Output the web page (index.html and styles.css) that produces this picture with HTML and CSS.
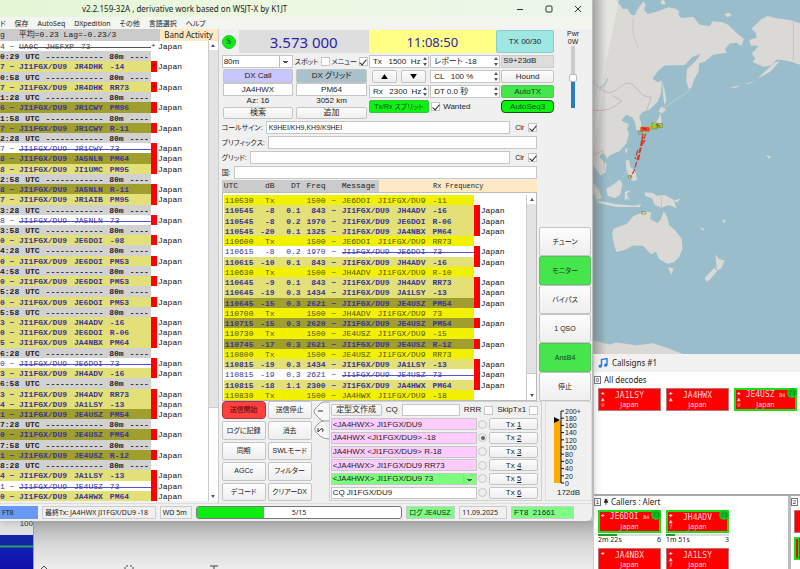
FILE: index.html
```html
<!DOCTYPE html>
<html lang="ja">
<head>
<meta charset="utf-8">
<title>v2.2.159-32A , derivative work based on WSJT-X by K1JT</title>
<link rel="stylesheet" href="styles.css">
</head>
<body>
<div class="desktop">
  <div class="left-side">
    <main class="window">
      <header class="titlebar">
        <h1>v2.2.159-32A , derivative work based on WSJT-X by K1JT</h1>
        <div class="caption">
          <button aria-label="最小化"><svg viewBox="0 0 8 8"><path d="M1 4.5h6"/></svg></button>
          <button aria-label="最大化"><svg viewBox="0 0 8 8"><rect x="1" y="1" width="6" height="6" rx="1"/></svg></button>
          <button aria-label="閉じる"><svg viewBox="0 0 8 8"><path d="M1 1l6 6M7 1l-6 6"/></svg></button>
        </div>
      </header>
      <nav class="menubar">
        <a href="#">ド</a><a href="#">保存</a><a href="#">AutoSeq</a><a href="#">DXpedition</a><a href="#">その他</a><a href="#">言語選択</a><a href="#">ヘルプ</a>
      </nav>
      <div class="panes">
        <section class="band">
          <div class="band-head"><span class="stats"><span>g</span><span>平均=0.23 Lag=-0.23/3</span></span><span class="peach">Band Activity</span></div>
          <div class="logbox">
            <table class="log" id="band-log"><tbody></tbody></table>
            <div class="scroll"><i class="up"></i><i class="thumb"></i><i class="down"></i></div>
          </div>
        </section>
        <section class="work">
          <div class="top">
            <div class="controls">
              <div class="dials">
                <button class="s-btn">S</button>
                <output class="freq">3.573 000</output>
                <output class="clock">11:08:50</output>
                <button class="tx-period">TX 00/30</button>
              </div>
              <div class="trio">
                <div class="dx">
                  <div class="band-row">
                    <select aria-label="バンド"><option>80m</option></select>
                    <label class="boxed">スポット<input type="checkbox"></label>
                    <label>メニュー<input type="checkbox" checked></label>
                  </div>
                  <div class="pair">
                    <button class="btn lilac">DX Call</button><button class="btn teal">DX グリッド</button>
                    <input class="center" value="JA4HWX" aria-label="DX Call"><input class="center" value="PM64" aria-label="DX グリッド">
                    <span>Az: 16</span><span>3052 km</span>
                    <button class="btn">検索</button><button class="btn">追加</button>
                  </div>
                </div>
                <div class="spins">
                  <div class="spin"><input value="Tx   1500  Hz" aria-label="Tx"><i></i></div>
                  <div class="spin"><input value="レポート -18" aria-label="レポート"><i></i></div>
                  <div class="arrows"><button class="btn" aria-label="上"><svg viewBox="0 0 8 6"><path d="M4 0l4 6H0z"/></svg></button><button class="btn" aria-label="下"><svg viewBox="0 0 8 6"><path d="M4 6l4-6H0z"/></svg></button></div>
                  <div class="spin"><input value="CL   100 %" aria-label="CL"><i></i></div>
                  <div class="spin"><input value="Rx   2300  Hz" aria-label="Rx"><i></i></div>
                  <div class="spin"><input value="DT 0.0 秒" aria-label="DT"><i></i></div>
                  <button class="btn lime">Tx/Rx スプリット</button>
                  <label class="wanted"><input type="checkbox" checked>Wanted</label>
                </div>
                <div class="modes">
                  <span class="smeter">S9+23dB</span>
                  <button class="btn">Hound</button>
                  <button class="btn green">AutoTX</button>
                  <button class="btn lime ring">AutoSeq3</button>
                </div>
              </div>
            </div>
            <div class="pwr">
              <label for="pwr">Pwr<br>0W</label>
              <input type="range" id="pwr" min="0" max="100" value="49">
            </div>
          </div>
          <div class="middle">
            <div class="rx">
              <div class="fields">
                <div class="field"><label for="cs">コールサイン:</label><input id="cs" value="K9HEI/KH9,KH9/K9HEI"><label class="clr">Clr<input type="checkbox" checked></label></div>
                <div class="field"><label for="pf">プリフィックス:</label><input id="pf"></div>
                <div class="field"><label for="gr">グリッド:</label><input id="gr"><label class="clr">Clr<input type="checkbox" checked></label></div>
                <div class="field"><label for="co">国:</label><input id="co"></div>
              </div>
              <div class="rx-head"><span class="cols"><span>UTC</span><span>dB</span><span>DT</span><span>Freq</span><span></span><span>Message</span></span><span class="peach">Rx Frequency</span></div>
              <div class="logbox framed">
                <table class="log rxlog" id="rx-log"><tbody></tbody></table>
                <div class="scroll low"><i class="up"></i><i class="thumb"></i><i class="down"></i></div>
              </div>
            </div>
            <div class="side">
              <button class="btn">チューン</button>
              <button class="btn green">モニター</button>
              <button class="btn">バイパス</button>
              <button class="btn">1 QSO</button>
              <button class="btn green">AnsB4</button>
              <button class="btn">停止</button>
            </div>
          </div>
          <div class="bottom">
            <div class="actions">
              <button class="btn red">送信開始</button><button class="btn">送信停止</button>
              <button class="btn">ログに記録</button><button class="btn">消去</button>
              <button class="btn">同期</button><button class="btn">SWLモード</button>
              <button class="btn">AGCc</button><button class="btn">フィルター</button>
              <button class="btn">デコード</button><button class="btn">クリアーDX</button>
            </div>
            <svg class="tabs" viewBox="0 0 17 40"><path d="M17 1H12Q9 1 7 4L3 8Q1 10 3 13L7 17Q9 20 12 20H17M12 20Q9 20 7 22L4 25Q1 28 4 31L8 35Q12 38 17 38"/><path class="num" d="M6 10h5M6 27v4l3-3q2-1 2 1t-1 2"/></svg>
            <div class="messages">
              <div class="msg-head">
                <button class="btn">定型文作成</button>
                <label for="cq">CQ</label><input id="cq">
                <label class="clr">RRR<input type="checkbox"></label>
                <label class="clr">SkipTx1<input type="checkbox"></label>
              </div>
              <div class="tx-row"><input class="pink" value="&lt;JA4HWX&gt; JI1FGX/DU9" aria-label="Tx 1 文"><input type="radio" name="tx" aria-label="次 1"><button class="btn">Tx <u>1</u></button></div>
              <div class="tx-row"><input class="pink" value="JA4HWX &lt;JI1FGX/DU9&gt; -18" aria-label="Tx 2 文"><input type="radio" name="tx" aria-label="次 2" checked><button class="btn">Tx <u>2</u></button></div>
              <div class="tx-row"><input class="pink" value="JA4HWX &lt;JI1FGX/DU9&gt; R-18" aria-label="Tx 3 文"><input type="radio" name="tx" aria-label="次 3"><button class="btn">Tx <u>3</u></button></div>
              <div class="tx-row"><input class="pink" value="&lt;JA4HWX&gt; JI1FGX/DU9 RR73" aria-label="Tx 4 文"><input type="radio" name="tx" aria-label="次 4"><button class="btn">Tx <u>4</u></button></div>
              <div class="tx-row"><select class="mint" aria-label="Tx 5 文"><option>&lt;JA4HWX&gt; JI1FGX/DU9 73</option></select><input type="radio" name="tx" aria-label="次 5"><button class="btn">Tx <u>5</u></button></div>
              <div class="tx-row"><input value="CQ JI1FGX/DU9" aria-label="Tx 6 文"><input type="radio" name="tx" aria-label="次 6"><button class="btn">Tx <u>6</u></button></div>
            </div>
            <div class="meter">
              <svg viewBox="0 0 40 82">
                <rect x="6" y="15" width="7" height="62" fill="#ffaa00"/>
                <path d="M16 5h-3v72h3M13 12.2h3M13 19.4h3M13 26.6h3M13 33.8h3M13 41h3M13 48.2h3M13 55.4h3M13 62.6h3M13 69.8h3" fill="none" stroke="#111"/>
                <path d="M6 11l6 3-6 3z"/>
                <g><text x="17" y="8">200+</text><text x="17" y="15">180</text><text x="17" y="22">160</text><text x="17" y="29">140</text><text x="17" y="37">120</text><text x="17" y="44">100</text><text x="17" y="51">80</text><text x="17" y="58">60</text><text x="17" y="65">40</text><text x="17" y="73">20</text><text x="17" y="80">0</text></g>
              </svg>
              <span>172dB</span>
            </div>
          </div>
        </section>
      </div>
      <footer class="status">
        <span class="s-mode">FT8</span>
        <span class="s-last">最終Tx: JA4HWX JI1FGX/DU9 -18</span>
        <span class="s-wd">WD 5m</span>
        <span class="progress"><i></i><b>5/15</b></span>
        <span class="s-log">ログ JE4USZ</span>
        <span class="s-date">11.09.2025</span>
        <span class="s-ft">FT8&nbsp; 21661</span>
      </footer>
    </main>
    <div class="behind">
      <div class="waterfall"><span>100</span><i></i></div>
      <svg class="marks" viewBox="0 0 180 4"><path d="M1 4l3-3 3 3M86 1h2m2 0h2m-7 1v2m8-2v2M170 1h8m-4 0v3" fill="none" stroke="#444"/></svg>
    </div>
  </div>
  <div class="right-side">
    <svg class="map" viewBox="10 0 620 1062" preserveAspectRatio="xMinYMin slice" role="img" aria-label="地図">
      <defs><linearGradient id="edge"><stop offset="0" stop-color="#555" stop-opacity=".4"/><stop offset="1" stop-color="#555" stop-opacity="0"/></linearGradient></defs>
      <rect x="10" width="620" height="1062" fill="#99bdca"/>
      <g fill="#dad9d5">
        <path d="M10 0H80L84 10 92 15 100 28 112 25 125 45 135 46 145 25 160 5 168 12 163 30 174 42 205 34 235 22 258 26 268 34 266 46 275 54 310 50 330 74 360 78 368 64 395 66 415 74 437 96 462 116 455 138 440 128 420 130 406 146 410 158 370 164 345 184 328 190 326 216 313 238 305 262 297 267 289 242 292 206 310 190 328 170 332 160 320 166 308 170 285 195 225 196 205 212 188 236 205 246 216 240 214 280 204 304 180 328 158 336 148 350 155 372 153 388 140 390 136 366 128 352 110 344 95 360 104 366 118 372 112 386 118 400 110 430 90 452 76 458 60 466 53 474 45 462 36 460 30 470 50 492 48 516 32 526 24 512 10 494z"/>
        <path d="M218 246l6 20 6 36-6 14-4-30zM214 320l16 8-14 12-10-6zM212 340l4 28-20 14-30 2 22-12 16-12zM158 388l12-2-6 14zM108 442l6 4-3 14-5-6zM108 480l10 0 4 20 14 12 6 26-10 6-14-14-8-24zM50 565l20-12 20-16 8 14-6 32-16 10-22-6zM10 546l16 20 10 28-14 4-12-20zM20 600l54 10 60 6 20-4-4 8-70 0-56-12zM105 574l20-4-14 10 10 22-10-8-6 8zM165 576l24 2 12 8 24-2 26 14 10 26-24-10-22 8-20-8-8-20-20-6zM250 602l22-8-8 12z"/>
        <path d="M222 632l10 18 6 24 18 16 20 26 2 30-10 24-16 16-20 4-24-14-10-22-14 8-24-26-30-1-24 14-26 6-6-20-7-34 4-16 40-14 20-24 16-6 20-8 18 4-4 18 22 14 10-12z"/>
        <path d="M234 800l18 4-8 18zM376 762l12 14 16 4-10 24-12 6-3-20zM374 802l8 10-20 24-12 8-6-12z"/>
        <path d="M630 70L600 60 560 55 532 48 514 58 484 86 498 98 500 112 478 120 482 136 506 138 486 160 496 176 488 186 520 200 544 196 560 178 578 180 606 186 630 194zM554 188l16-6-28 32-40 22 34-32zM404 42l14-4 8 8-14 6zM212 2l10-2 6 12-12 2z"/>
        <path d="M10 1020L60 1032 80 1026 140 1034 190 1028 232 1042 258 1052 284 1062H10zM420 262l30-6-16 8zM464 252l30-10-14 8zM528 466l14 2-4 8zM396 662l12-6-4 12zM330 680l16 8-8 2zM342 652l12 6zM282 600l16 6zM306 612l14 8z"/>
      </g>
      <path d="M10 0H88L50 180 34 320 10 460z" fill="#f0f0eb" opacity=".55"/>
      <path d="M10 244Q30 272 58 278L80 270Q110 240 128 252L160 286 184 292 168 338M10 330Q60 338 96 302L68 286M10 465l30-15 4 60" fill="none" stroke="#c6a2ac" stroke-width="2"/>
      <path d="M132 54q-10 40 14 90M215 590v45M610 64v116" fill="none" stroke="#bbb" stroke-width="2"/>
      <path d="M218 326L300 270M100 530l20-30" stroke="#c8d5d8" stroke-width="2"/>
      <path d="M30 264Q48 255 54 235" fill="none" stroke="#9abbc7" stroke-width="3"/>
      <path d="M160 400L150 450 134 510 122 530M168 400L152 450 146 480M160 410l-6 20m12-10l-8 12M144 450l-8 26" fill="none" stroke="#d33a2c" stroke-width="4" stroke-dasharray="16 6"/>
      <path d="M152 380h28v14H152z" fill="#f0481c"/><path d="M178 376h36v7H178zM186 370h14v16H186z" fill="#a4c623"/>
      <path d="M146 394h12v8H146zM186 368h16v18H186zM202 370h16v12H202zM116 526h10v7H116zM156 634h12v7H156z" fill="none" stroke="#6f8f26" stroke-width="2"/>
      <path d="M200 372l10 6M158 382l12 6" stroke="#a63218" stroke-width="4"/>
      <rect x="10" width="42" height="1062" fill="url(#edge)"/>
    </svg>
    <section class="calls">
      <header><svg viewBox="0 0 10 10"><path d="M3.500 8V1.500L9 .6V7" fill="none" stroke="#2878e8" stroke-width="1.400"/><circle cx="2.200" cy="8.200" r="1.600"/><circle cx="7.600" cy="7.200" r="1.600"/></svg><h2>Callsigns #1</h2></header>
      <div class="decodes">
        <h3><kbd>0</kbd>All decodes</h3>
        <div class="tiles">
          <div class="tile"><em>✚<br>▲<br>▽</em><b>JA1LSY</b><span>Japan</span></div>
          <div class="tile"><em>✚<br>▲</em><b>JA4HWX</b><span>Japan</span></div>
          <div class="tile worked"><em>✚<br>▲<br>▽</em><b>JE4USZ <small>B4</small></b><span>Japan</span><i>73</i></div>
        </div>
      </div>
      <div class="alerts">
        <div class="alert-main">
          <h3><kbd>1</kbd><svg class="pin" viewBox="0 0 4 7"><path d="M1 0h2v3h1v1H0V3h1zM2 4v3" stroke="#333"/></svg>Callers : Alert</h3>
          <div class="tiles">
            <div class="cell"><div class="tile worked"><em>✚</em><b>JE6DOI <small>B4</small></b><span>Japan</span><i>73</i></div><meter value="30" max="100"></meter><p><span>2m 22s</span><span>6</span></p></div>
            <div class="cell"><div class="tile worked"><em>✚<br>▲<br>?</em><b>JH4ADV</b><span>Japan</span><i>73</i></div><meter value="15" max="100"></meter><p><span>1m 51s</span><span>3</span></p></div>
            <div class="tile next"><em>✚</em><b>JA4NBX</b><span>Japan</span></div>
            <div class="tile next"><em>✚<br>▲<br>?</em><b>JA1LSY</b><span>Japan</span></div>
          </div>
        </div>
        <div class="alert-next"><h3><kbd>2</kbd></h3><div class="tile"></div><div class="tile worked"></div></div>
      </div>
    </section>
  </div>
</div>
<script src="logs.js"></script>
</body>
</html>
```
FILE: logs.js
```js
// Row kinds: n = new call, d = decoded with worked grid, x = closing 73, t = own transmission.
const band = [
  "4 x UA0C JH5FXP 73", "0:29", "7 n JR4DHK -14", "0:58", "7 n JR4DHK RR73", "1:28", "6 d JR1CWY PM96", "1:58",
  "7 d JR1CWY R-11", "2:28", "7 x JR1CWY 73", "8 d JA5NLN PM64", "8 n JI1UMC PM95", "2:58", "8 d JA5NLN R-11",
  "7 n JR1AIB PM95", "3:28", "8 x JA5NLN 73", "3:58", "0 n JE6DOI -08", "4:28", "0 n JE6DOI PM53", "4:58",
  "0 n JE6DOI PM53", "5:28", "0 n JE6DOI PM53", "5:58", "3 n JH4ADV -16", "0 n JE6DOI R-06", "5 n JA4NBX PM64",
  "6:28", "0 x JE6DOI 73", "3 n JH4ADV -16", "6:58", "3 n JH4ADV RR73", "4 n JA1LSY -13", "1 d JE4USZ PM54",
  "7:28", "0 d JE4USZ PM54", "7:58", "1 d JE4USZ R-12", "8:28", "4 n JA1LSY -13", "1 x JE4USZ 73", "0 n JA4HWX PM64"
];
const rx = [
  "110530 t - - 1500 JE6DOI -11", "110545 n -8 0.1 843 JH4ADV -16", "110545 n -8 0.2 1970 JE6DOI R-06",
  "110545 n -20 0.1 1325 JA4NBX PM64", "110600 t - - 1500 JE6DOI RR73", "110615 x -8 0.2 1970 JE6DOI 73",
  "110615 n -10 0.1 843 JH4ADV -16", "110630 t - - 1500 JH4ADV R-10", "110645 n -9 0.1 843 JH4ADV RR73",
  "110645 n -19 0.3 1434 JA1LSY -13", "110645 d -15 0.3 2621 JE4USZ PM54", "110700 t - - 1500 JH4ADV 73",
  "110715 d -15 0.3 2620 JE4USZ PM54", "110730 t - - 1500 JE4USZ -15", "110745 d -17 0.3 2621 JE4USZ R-12",
  "110800 t - - 1500 JE4USZ RR73", "110815 n -19 0.3 1434 JA1LSY -13", "110815 x -19 0.3 2621 JE4USZ 73",
  "110815 n -18 1.1 2300 JA4HWX PM64", "110830 t - - 1500 JA4HWX -18"
];
const words = list => `<td class="msg"><div>${list.map(w => `<span>${w}</span>`).join("")}</div></td>`;
const tail = mark => `<td class="flag">${mark}</td><td class="country">Japan</td>`;

document.querySelector("#band-log tbody").innerHTML = band.map((line, i) => {
  const p = line.split(" ");
  if (p.length === 1) {
    return `<tr class="utc"><td><span>${p[0]}</span><span>UTC</span><span>------------</span><span>80m</span><span>----</span></td></tr>`;
  }
  const other = p.length === 5;
  const list = other ? p.slice(2) : ["JI1FGX/DU9", ...p.slice(2)];
  return `<tr class="${p[1]}${other ? " other" : ""}"><td>${p[0]}</td><td>~</td>${words(list)}${tail(i < 5 ? "*" : "")}</tr>`;
}).join("");

document.querySelector("#rx-log tbody").innerHTML = rx.map(line => {
  const [utc, kind, db, dt, freq, call, report] = line.split(" ");
  const own = kind === "t";
  const list = own ? [call, "JI1FGX/DU9", report] : ["JI1FGX/DU9", call, report];
  return `<tr class="${kind}"><td>${utc}</td><td>${own ? "Tx" : db}</td><td>${own ? "" : dt}</td><td>${freq}</td><td>~</td>${words(list)}${own ? "" : tail("")}</tr>`;
}).join("");
```
FILE: styles.css
```css
* { box-sizing: border-box; }
body { margin: 0; font: 8px/10px "Liberation Sans", "Noto Sans CJK JP", sans-serif; font-feature-settings: "palt"; color: #222; background: #eee; }
button, input, select { font: inherit; color: inherit; margin: 0; padding: 0; min-width: 0; border: 0; font-feature-settings: "palt"; }
h1, h2, h3, p { margin: 0; font: inherit; }
a { color: inherit; text-decoration: none; }
i, em { font-style: normal; }

.desktop { display: grid; grid-template-columns: minmax(0, 593fr) minmax(0, 207fr); height: 100vh; overflow: hidden; }
.left-side, .right-side { display: flex; flex-direction: column; min-height: 0; min-width: 0; }
.left-side { background: #cfcfcf; }

/* Main window */
.window { flex: 1; min-height: 0; display: flex; flex-direction: column; background: #f0f0f0; border-right: 1px solid #bbb; border-radius: 0 0 6px 0; z-index: 1; box-shadow: 0 1px 8px #8888; }
.titlebar { display: flex; height: 17px; background: linear-gradient(90deg, #e4f6d6, #edf8e2 50%, #eaf7ea); align-items: center; padding-left: 82px; }
.titlebar h1 { flex: 1; font: 8px/14px "Noto Sans", sans-serif; }
.caption { display: flex; gap: 18px; padding-right: 9px; }
.caption button { background: none; width: 11px; height: 10px; }
.caption svg { display: block; width: 8px; height: 8px; fill: none; stroke: #333; margin: auto; }
.menubar { height: 12px; display: flex; gap: 9px; line-height: 13px; background: #f3f5f0; font-family: "Noto Sans", "Noto Sans CJK JP", sans-serif; font-size: 7px; }
.panes { flex: 1; min-height: 0; display: grid; grid-template-columns: minmax(0, 219fr) minmax(0, 374fr); }
.peach { background: #ffe8c4; text-align: center; }

/* Decode lists */
.band, .rx { display: flex; flex-direction: column; min-height: 0; min-width: 0; }
.band { padding-bottom: 2px; border-right: 1px solid #ccc; }
.band-head { display: flex; height: 12px; line-height: 12px; }
.stats { flex: 1; background: #cbcbcb; display: flex; gap: 14px; font: 8px/12px "Liberation Mono", "Noto Sans CJK JP", monospace; }
.band-head .peach { width: 58px; font-family: "Noto Sans", sans-serif; }
.logbox { flex: 1; min-height: 0; display: flex; background: #fff; }
.framed { border: 1px solid #bbb; padding: 2px 0 0 1px; }
.log { flex: 1; min-width: 0; display: flex; font: bold 8px/12px "Liberation Mono", monospace; }
.log tbody { flex: 1; display: grid; grid-auto-rows: minmax(0, 1fr); }
.log tr { display: grid; grid-template-columns: 5px 14px 132px 6px 1fr; color: #3a349a; }
.log td { padding: 0; white-space: pre; min-width: 0; min-height: 0; height: 100%; }
.log td:nth-child(2) { text-align: center; }
.log .utc { grid-template-columns: 151px; color: #222; }
.log .utc td { display: flex; gap: 6px; background: #d1d1d1; text-align: left; }
.msg div { display: flex; gap: 7px; }
.n td { background: #e2e077; }
.d td { background: #a09f2d; }
.t td { background: #f2f200; }
.x td { font-weight: normal; }
.x .msg { background: linear-gradient(#5550d8, #5550d8) 0 6px / 100% 1px no-repeat; }
.log .flag { background: #f00; color: #600; font-weight: normal; }
.log .country { background: #fff; color: #111; font-weight: normal; padding-left: 1px; }
.log .other { color: #444; }
.other .msg { background: linear-gradient(#555, #555) 0 6px / 100% 1px no-repeat; }
.log .other .flag { background: #fff; color: #111; }
.log.rxlog tr { grid-template-columns: 31px 20px 26px 25px 16px 132px 6px 1fr; }
.rxlog td:nth-child(-n+4) { text-align: right; }
.log.rxlog td:first-child { text-align: left; padding-left: 1px; }
.log.rxlog td:nth-child(2) { text-align: right; }
.rxlog td:nth-child(5) { text-align: center; }
.log .t { color: #55520a; }
.log .t td { font-weight: normal; }

.scroll { width: 10px; display: flex; flex-direction: column; background: #e3e3e3; border-left: 1px solid #ccc; }
.scroll i { background: #fff; display: grid; place-items: center; }
.scroll .up, .scroll .down { height: 9px; }
.scroll .up::before, .scroll .down::before { content: ""; border: 2px solid transparent; border-top: 0; border-bottom: 3px solid #555; }
.scroll .down::before { transform: rotate(180deg); }
.scroll .thumb { margin-top: auto; height: 85px; border-top: 1px solid #ccc; }
.scroll.low .thumb { height: 18px; }

/* Shared controls */
.btn { background: linear-gradient(#fdfdfd, #eee); border: 1px solid #c4c4c4; border-radius: 2px; font-size: 8px; line-height: 10px; white-space: nowrap; text-align: center; }
.lilac { background: #c8c6ff; }
.teal { background: #a9c1ca; }
.green { background: #45e64b; border-color: #5bbf5f; color: #142; }
.lime { background: #0cf312; border-color: #37c33a; color: #142; }
.ring { border: 1px solid #145214; border-radius: 4px; }
.red { background: #ff4040; border-color: #a33; border-radius: 4px; color: #500; }
input, select { background: #fff; border: 1px solid #c6c6c6; }
input { width: 100%; }
.center { text-align: center; }
select { appearance: none; padding-left: 1px; }
input[type=checkbox], input[type=radio] { appearance: none; flex: none; width: 9px; height: 9px; display: grid; place-items: center; }
input[type=checkbox]:checked::before { content: ""; width: 3px; height: 6px; border: solid #222; border-width: 0 1px 1px 0; transform: rotate(40deg); }
input[type=radio] { border-radius: 50%; background: #eee; }
input[type=radio]:checked::before { content: ""; width: 4px; height: 4px; border-radius: 50%; background: #666; }
label { white-space: nowrap; }

/* Top controls */
.work { display: flex; flex-direction: column; min-height: 0; min-width: 0; padding: 1px 0 2px 3px; }
.top { display: flex; height: 91px; }
.controls { flex: 1; min-width: 0; display: flex; flex-direction: column; gap: 2px; }
.dials { display: grid; grid-template-columns: 17px 130fr 127fr 58fr; height: 23px; align-items: stretch; text-align: center; }
.dials output { display: grid; place-items: center; color: #2b24a8; font-family: "Noto Sans", sans-serif; }
.s-btn { width: 14px; height: 14px; border-radius: 50%; background: #12e81a; font: bold 8px/12px "Liberation Serif", serif; color: #063; align-self: center; padding: 0; border: 1px solid #2c2; }
.dials .freq { background: #dedede; font-size: 15px; }
.dials .clock { background: #ffff86; font-size: 13px; }
.tx-period { background: #9fe7e3; border: 1px solid #8cc; border-radius: 2px; }
.trio { display: grid; grid-template-columns: 147fr 132fr 53fr; gap: 1px; align-items: start; }
.trio > * { min-width: 0; }
.band-row { display: flex; height: 13px; align-items: center; justify-content: space-between; font-size: 7px; }
.band-row select { width: 71px; height: 13px; font-size: 8px; }
.band-row label { display: flex; align-items: center; gap: 2px; }
.band-row select, .mint { background-image: linear-gradient(#555, #555), linear-gradient(#555, #555), linear-gradient(#bbb, #bbb); background-size: 5px 1px, 3px 1px, 1px 100%; background-position: right 4px top 5px, right 5px top 6px, right 12px top 0; background-repeat: no-repeat; }
.pair { display: grid; grid-template-columns: 1fr 1fr; grid-template-rows: 14px 13px 11px 12px; column-gap: 3px; padding: 1px 1px 0; text-align: center; }
.pair > * { line-height: 10px; }
.spins { display: grid; grid-template-columns: 61fr 71fr; grid-auto-rows: 13px; gap: 2px 1px; }
.spin { position: relative; display: flex; }
.spin input { padding-left: 3px; white-space: pre; }
.spin i { position: absolute; right: 2px; top: 2px; width: 5px; height: 9px; display: flex; flex-direction: column; justify-content: space-between; align-items: center; }
.spin i::before, .spin i::after { content: ""; border: 2px solid transparent; border-top: 0; border-bottom: 3px solid #555; }
.spin i::after { transform: rotate(180deg); }
.arrows { display: flex; gap: 4px; padding: 0 3px; }
.arrows .btn { flex: 1; }
.arrows svg { width: 7px; height: 5px; display: block; margin: auto; }
.spins .lime { font-size: 7px; }
.wanted { display: flex; align-items: center; gap: 3px; padding-left: 1px; }
.modes { display: grid; grid-auto-rows: 13px; gap: 2px; }
.smeter { background: #ddd; border: 1px solid #ccc; padding-left: 1px; }
.pwr { width: 38px; display: flex; flex-direction: column; align-items: center; text-align: center; line-height: 8px; font-size: 7px; }
.pwr input { appearance: none; writing-mode: vertical-lr; direction: rtl; width: 8px; height: 62px; border: 0; background: linear-gradient(#ccc 50%, #2b7cc4 50%) center / 4px 100% no-repeat; }
.pwr input::-webkit-slider-thumb { appearance: none; width: 8px; height: 8px; border-radius: 2px; background: #fff; border: 1px solid #bbb; }

/* Receive block */
.middle { flex: 1; min-height: 0; display: grid; grid-template-columns: minmax(0, 316fr) minmax(0, 53fr); gap: 2px; }
.fields { display: grid; gap: 2px; padding-bottom: 1px; }
.field { display: flex; height: 13px; align-items: center; gap: 3px; font-size: 7px; }
.field > input { flex: 1; height: 13px; padding-left: 2px; }
.clr { display: flex; align-items: center; gap: 4px; padding-left: 2px; }
.rx-head { display: grid; grid-template-columns: 1fr 1fr; height: 12px; font: 8px/12px "Liberation Mono", monospace; }
.rx-head .peach { font-size: 7px; }
.cols { display: grid; grid-template-columns: 31px 20px 26px 25px 16px 1fr; background: #cbcbcb; text-align: right; padding-left: 2px; }
.cols span:first-child, .cols span:last-child { text-align: left; }
.side { display: flex; flex-direction: column; justify-content: flex-end; padding-right: 1px; }
.side .btn { height: 29px; font-size: 7px; }

/* Transmit block */
.bottom { height: 100px; display: grid; grid-template-columns: 90px 17px minmax(0, 214fr) minmax(0, 50fr); }
.actions { display: grid; grid-template-columns: 1fr 1fr; gap: 2px; }
.actions .btn { font-size: 7px; }
.tabs { width: 17px; height: 40px; fill: #f8f8f8; stroke: #999; }
.tabs .num { stroke: #333; fill: none; }
.messages { border: 1px solid #d0d0d0; padding: 1px 3px 1px 1px; display: grid; grid-template-rows: 14px repeat(6, minmax(0, 1fr)); row-gap: 1px; }
.msg-head { display: flex; gap: 4px; align-items: center; }
.msg-head .btn { width: 51px; height: 12px; flex: none; }
.msg-head > input { height: 12px; flex: 1; }
.msg-head .clr { padding: 0; gap: 3px; }
.tx-row { display: grid; grid-template-columns: minmax(0, 1fr) 10px 49px; gap: 1px; align-items: center; }
.tx-row > .btn { height: 12px; line-height: 9px; }
.tx-row > input:first-child, .tx-row select { height: 12px; width: 100%; padding-left: 1px; line-height: 10px; }
.tx-row .pink { background: #ffccff; }
.tx-row .mint { background-color: #7cff7c; }
.meter { border: 1px solid #ddd; margin-left: 3px; text-align: center; padding-top: 4px; }
.meter svg { display: block; width: 40px; height: 82px; margin-left: 2px; }
.meter text { font-size: 7px; fill: #222; }

/* Status bar */
.status { height: 18px; display: grid; grid-template-columns: 38fr 114fr 32fr 207fr 49fr 48fr 63fr; gap: 4px; padding: 2px 18px 3px 0; line-height: 12px; border-top: 1px solid #ddd; }
.status > span { border: 1px solid #ccc; padding: 0 2px; white-space: nowrap; min-width: 0; font-family: "Noto Sans", "Noto Sans CJK JP", sans-serif; font-size: 7px; line-height: 11px; }
.status .s-mode { background: #6799f4; border: 0; line-height: 13px; }
.status .s-log, .status .s-ft { background: #7dff86; font-family: "Liberation Sans", "Noto Sans CJK JP", sans-serif; }
.status .s-ft { font-size: 8px; }
.status .progress { display: grid; padding: 0; border: 1px solid #777; border-radius: 3px; background: #fff; }
.progress > * { grid-area: 1 / 1; }
.progress i { width: 33%; background: #0bec10; }
.progress b { text-align: center; font-weight: normal; }

/* Desktop area under the main window */
.behind { height: 48px; display: flex; background: linear-gradient(#aeaeae, #d9d9d9 50%, #ededed); }
.waterfall { width: 34px; padding-top: 14px; background: #e2e2e2; display: flex; flex-direction: column; position: relative; border-right: 1px solid #999; }
.waterfall span { position: absolute; top: -2px; right: 0; }
.waterfall i { flex: 1; background: linear-gradient(#1224a6 10px, #26a06c 11px, #26a06c 12px, #1020b4 13px, #1010a8); }
.marks { align-self: flex-end; width: 180px; height: 4px; margin-left: 6px; }

/* Map and callsign window */
.map { flex: 1; min-height: 0; width: 100%; display: block; }
.calls { height: 215px; background: #fff; display: flex; flex-direction: column; border-radius: 4px 0 0 0; border-left: 1px solid #ccc; font-family: "Noto Sans", sans-serif; }
.calls header { height: 18px; background: #f1f1f1; display: flex; align-items: center; gap: 4px; padding-left: 4px; }
.calls header svg { width: 10px; height: 10px; fill: #2878e8; }
.calls h3 { display: flex; align-items: center; gap: 3px; height: 12px; }
kbd { width: 7px; height: 8px; border: 1px solid #777; font: 6px/6px "Liberation Sans", sans-serif; text-align: center; }
.pin { width: 4px; height: 6px; }
.decodes { height: 124px; border-bottom: 2px solid #aaa; }
.decodes h3 { margin-top: 2px; }
.tiles { display: grid; grid-template-columns: repeat(3, 63px); gap: 4px 5px; padding: 2px 0 0 4px; }
.tile { position: relative; height: 23px; background: #f00; border: 1px solid #b77; color: #ffdcdc; text-align: center; font: 8px/9px "DejaVu Sans Mono", monospace; display: flex; flex-direction: column; justify-content: center; }
.tile b { font-weight: normal; }
.tile span { font: 7px/9px "Noto Sans", sans-serif; }
.tile small { font-size: 5px; }
.tile em { position: absolute; left: 2px; top: 1px; font-size: 6px; line-height: 6px; }
.tile i { position: absolute; right: -1px; top: -1px; width: 10px; height: 10px; border-radius: 50%; background: #0fc516; color: #064; font-size: 6px; line-height: 10px; }
.worked { border: 1px solid #1bdd12; outline: 1px solid #1bdd12; outline-offset: -2px; }
.alerts { flex: 1; min-height: 0; display: grid; grid-template-columns: minmax(0, 1fr) 9px; overflow: hidden; }
.alert-main { border-right: 3px solid #bbb; min-width: 0; overflow: hidden; }
.alert-main .tiles { grid-template-columns: repeat(2, 63px); }
.alert-next .tile { margin: 2px 0 4px 3px; border-right: 0; }
.cell meter { display: block; appearance: none; width: 100%; height: 2px; margin-top: 1px; }
.cell meter::-webkit-meter-bar { background: #ddd; border: 0; border-radius: 0; height: 2px; display: block; }
.cell meter::-webkit-meter-optimum-value { background: #1a9c28; }
.cell p { display: flex; justify-content: space-between; font-size: 7px; line-height: 8px; }
```
